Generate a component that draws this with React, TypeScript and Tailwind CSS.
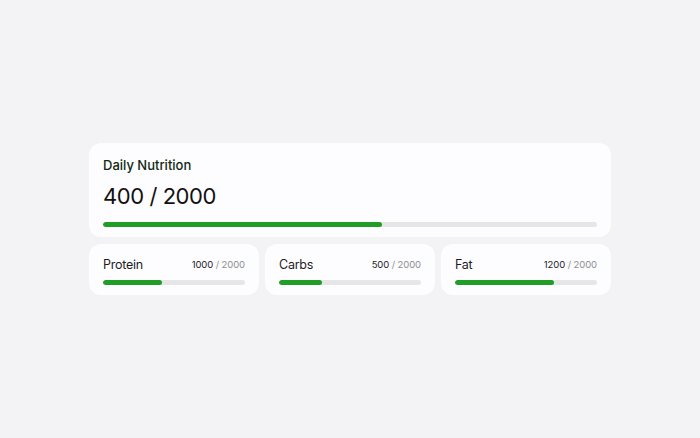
import React from "react";

const font = { fontFamily: "Inter, 'Noto Sans', sans-serif" };

function Bar({ pct }: { pct: number }) {
  return (
    <div className="h-[5px] w-full rounded-full bg-[#e6e5e8] overflow-hidden">
      <div className="h-full rounded-full bg-[#1f9d24]" style={{ width: `${pct}%` }} />
    </div>
  );
}

function Macro({ name, value, pct }: { name: string; value: string; pct: number }) {
  return (
    <div className="flex-1 rounded-[12px] bg-[#fdfcfe] px-[14px] pt-[13px] pb-[10px]">
      <div className="flex items-center justify-between h-[16px]">
        <span className="text-[12.5px] tracking-[-0.02em] text-[#1c1c1e]">{name}</span>
        <span className="text-[9.5px] tracking-[-0.01em] text-[#1c1c1e]">
          {value} <span className="text-[#8e8e93]">/ 2000</span>
        </span>
      </div>
      <div className="mt-[7px]">
        <Bar pct={pct} />
      </div>
    </div>
  );
}

export default function App() {
  return (
    <div className="w-[700px] h-[438px] bg-[#f3f2f4] flex items-center justify-center" style={font}>
      <div className="w-[522px] flex flex-col gap-[7px]">
        <div className="rounded-[12px] bg-[#fdfcfe] px-[14px] pt-[14px] pb-[10px]">
          <div className="text-[13px] font-medium text-[#0f2a12] leading-[16px]">Daily Nutrition</div>
          <div className="mt-[10px] text-[22px] tracking-[-0.02em] text-[#111] leading-[26px]">400 / 2000</div>
          <div className="mt-[13px]">
            <Bar pct={56.5} />
          </div>
        </div>
        <div className="flex gap-[6px]">
          <Macro name="Protein" value="1000" pct={41.5} />
          <Macro name="Carbs" value="500" pct={30} />
          <Macro name="Fat" value="1200" pct={70} />
        </div>
      </div>
    </div>
  );
}
